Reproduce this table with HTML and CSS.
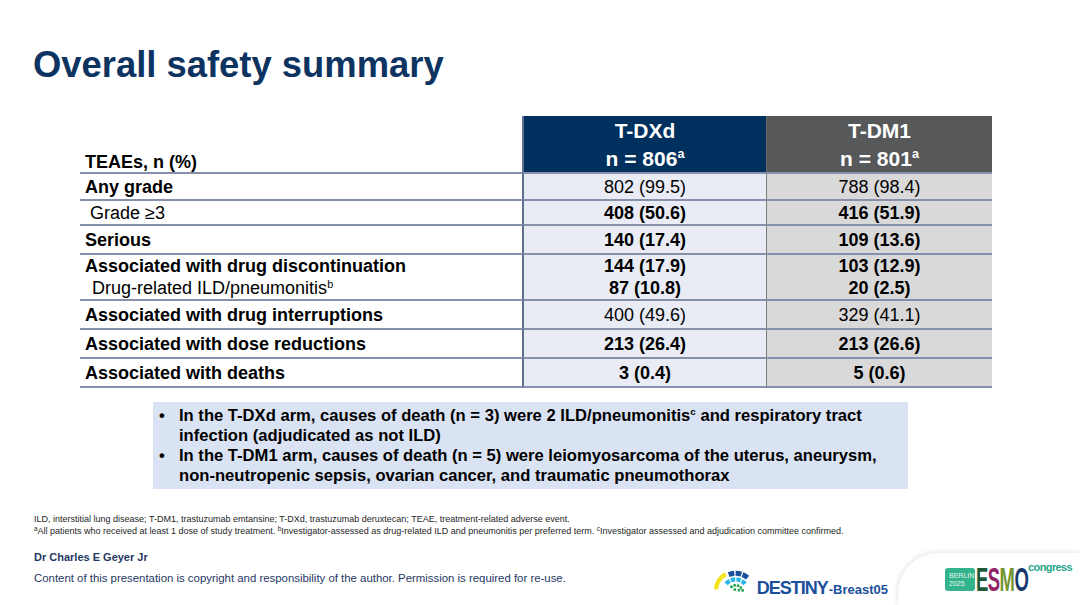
FILE: index.html
```html
<!DOCTYPE html>
<html lang="en">
<head>
<meta charset="utf-8">
<title>Overall safety summary</title>
<link rel="stylesheet" href="styles.css">
</head>
<body>
<div class="slide">
  <h1 class="title">Overall safety summary</h1>

  <div class="safety">
    <div class="c lab h hlab">TEAEs, n (%)</div>
    <div class="c h hdxd"><div>T-DXd</div><div>n = 806<sup class="sp">a</sup></div></div>
    <div class="c h hdm1"><div>T-DM1</div><div>n = 801<sup class="sp">a</sup></div></div>

    <div class="c lab b">Any grade</div>
    <div class="c val dxd">802 (99.5)</div>
    <div class="c val dm1">788 (98.4)</div>

    <div class="c lab sub">Grade ≥3</div>
    <div class="c val dxd b">408 (50.6)</div>
    <div class="c val dm1 b">416 (51.9)</div>

    <div class="c lab b">Serious</div>
    <div class="c val dxd b">140 (17.4)</div>
    <div class="c val dm1 b">109 (13.6)</div>

    <div class="c lab two"><div class="b">Associated with drug discontinuation</div><div class="sub2">Drug-related ILD/pneumonitis<sup class="sp">b</sup></div></div>
    <div class="c val dxd b two"><div>144 (17.9)</div><div>87 (10.8)</div></div>
    <div class="c val dm1 b two"><div>103 (12.9)</div><div>20 (2.5)</div></div>

    <div class="c lab b">Associated with drug interruptions</div>
    <div class="c val dxd">400 (49.6)</div>
    <div class="c val dm1">329 (41.1)</div>

    <div class="c lab b">Associated with dose reductions</div>
    <div class="c val dxd b">213 (26.4)</div>
    <div class="c val dm1 b">213 (26.6)</div>

    <div class="c lab b last">Associated with deaths</div>
    <div class="c val dxd b last">3 (0.4)</div>
    <div class="c val dm1 b last">5 (0.6)</div>
  </div>

  <div class="note">
    <ul class="bullets">
      <li><span class="dot">•</span><p class="btext"><span class="ln">In the T-DXd arm, causes of death (n = 3) were 2 ILD/pneumonitis<sup class="sp">c</sup> and respiratory tract</span><span class="ln">infection (adjudicated as not ILD)</span></p></li>
      <li><span class="dot">•</span><p class="btext"><span class="ln">In the T-DM1 arm, causes of death (n = 5) were leiomyosarcoma of the uterus, aneurysm,</span><span class="ln">non-neutropenic sepsis, ovarian cancer, and traumatic pneumothorax</span></p></li>
    </ul>
  </div>

  <div class="foot">
    <p>ILD, interstitial lung disease; T-DM1, trastuzumab emtansine; T-DXd, trastuzumab deruxtecan; TEAE, treatment-related adverse event.</p>
    <p><sup class="fs">a</sup>All patients who received at least 1 dose of study treatment. <sup class="fs">b</sup>Investigator-assessed as drug-related ILD and pneumonitis per preferred term. <sup class="fs">c</sup>Investigator assessed and adjudication committee confirmed.</p>
  </div>

  <div class="bottom">
    <div class="credits">
      <div class="author">Dr Charles E Geyer Jr</div>
      <div class="copy">Content of this presentation is copyright and responsibility of the author. Permission is required for re-use.</div>
    </div>
    <div class="destiny">
      <svg class="dicon" width="37" height="22" viewBox="0 0 36 21">
        <path d="M2.8 18.5 A19.5 19.5 0 0 1 12.3 3.9" fill="none" stroke="#f5e21b" stroke-width="4.2"/>
        <path d="M15.3 4.3 A18 18 0 0 1 20.7 3.0" fill="none" stroke="#1b4f9c" stroke-width="4.8"/>
        <path d="M22 3 A18 18 0 0 1 27.6 3.9" fill="none" stroke="#1b4f9c" stroke-width="4.8"/>
        <path d="M28.7 4.3 A18 18 0 0 1 33.6 7.2" fill="none" stroke="#1b4f9c" stroke-width="4.8"/>
        <path d="M12.8 13.3 A12 12 0 0 1 16.4 10.4" fill="none" stroke="#2bb4e6" stroke-width="4.2"/>
        <path d="M17.5 9.9 A12 12 0 0 1 21.6 9.0" fill="none" stroke="#2bb4e6" stroke-width="4.2"/>
        <path d="M22.8 9.0 A12 12 0 0 1 26.9 10.0" fill="none" stroke="#2bb4e6" stroke-width="4.2"/>
        <path d="M28 10.6 A12 12 0 0 1 31.2 13.3" fill="none" stroke="#2bb4e6" stroke-width="4.2"/>
        <g fill="#2aa352">
          <rect x="16.7" y="14.9" width="2.5" height="2.5"/>
          <rect x="19.8" y="13.5" width="2.5" height="2.5"/>
          <rect x="23.1" y="13.8" width="2.5" height="2.5"/>
          <rect x="25.9" y="15.7" width="2.5" height="2.5"/>
          <rect x="20.0" y="17.6" width="2.5" height="2.5"/>
          <rect x="24.0" y="18.2" width="2.5" height="2.5"/>
          <rect x="27.6" y="18.4" width="2.5" height="2.5"/>
        </g>
      </svg>
      <span class="dname">DESTINY</span><span class="dsub">-Breast05</span>
    </div>
    <div class="esmo-panel">
      <div class="berlin"><span>BERLIN</span><span>2025</span></div>
      <div class="esmo"><span class="esmo-in"><span class="e1">E</span><span class="e2">S</span><span class="e3">M</span><span class="e4">O</span></span></div>
      <div class="congress">congress</div>
    </div>
  </div>
</div>
</body>
</html>
```
FILE: styles.css
```css
* { box-sizing: border-box; }

body {
  margin: 0;
  background: #ffffff;
  font-family: "Liberation Sans", Arial, sans-serif;
  color: #000;
}

.slide {
  width: 1080px;
  height: 605px;
  overflow: hidden;
  display: flex;
  flex-direction: column;
  background: #ffffff;
}

.title {
  margin: 0;
  padding: 44px 0 0 33px;
  font-size: 36.4px;
  line-height: 42px;
  font-weight: bold;
  color: #0d3461;
}

/* ---------- table ---------- */
.safety {
  margin: 30px 0 0 80px;
  width: 912px;
  display: grid;
  grid-template-columns: 444px 242px 226px;
  grid-template-rows: 56px 27px 25px 29px 46px 29px 29px 31px;
}

.c {
  display: flex;
  align-items: center;
  font-size: 18px;
  line-height: 22px;
  border-top: 2px solid #8891ab;
  white-space: nowrap;
}

.c.h { border-top: none; }

.b { font-weight: bold; }

.lab {
  padding-left: 5px;
  border-right: 2px solid #5f6f92;
}

.lab.sub { padding-left: 10px; }

.sub2 { padding-left: 7px; }

.val { justify-content: center; }

.two {
  flex-direction: column;
  align-items: flex-start;
  justify-content: center;
}

.val.two { align-items: center; }

.dxd { background: #e9ecf5; }

.dm1 {
  background: #d9d9d9;
  border-left: 1px solid #7d7d7d;
}

.last { border-bottom: 2px solid #8891ab; }

.hlab {
  align-items: flex-end;
  font-weight: bold;
  line-height: 20px;
  border-bottom: none;
}

.hdxd, .hdm1 {
  display: block;
  text-align: center;
  color: #ffffff;
  font-size: 21px;
  font-weight: bold;
  line-height: 28px;
  padding-top: 1px;
  overflow: hidden;
}

.hdxd { background: #00305e; }
.hdm1 { background: #57585a; border-left: 1px solid #6a6a6a; }

.sp {
  font-size: 0.6em;
  line-height: 0;
  vertical-align: 0.6em;
}

/* ---------- note box ---------- */
.note {
  margin: 14px 0 0 153px;
  width: 755px;
  height: 87px;
  background: #dae3f3;
  padding: 4px 8px 0 0;
}

.bullets {
  margin: 0;
  padding: 0;
  list-style: none;
  font-size: 16.6px;
  line-height: 20px;
  font-weight: bold;
  color: #000;
}

.bullets li { display: flex; }

.btext { margin: 0; flex: 1; }

.ln { display: block; white-space: nowrap; }

.dot {
  flex: 0 0 26px;
  padding-left: 6px;
}

/* ---------- footnotes ---------- */
.foot {
  margin: 24px 0 0 34px;
  font-size: 9px;
  line-height: 12px;
  color: #1e1e1e;
}

.foot p { margin: 0; white-space: nowrap; }

.fs {
  font-size: 0.7em;
  line-height: 0;
  vertical-align: 0.45em;
}

/* ---------- bottom bar ---------- */
.bottom {
  flex: 1;
  display: flex;
}

.credits {
  flex: 1;
  padding-left: 34px;
  color: #1f3864;
}

.author {
  margin-top: 13px;
  font-size: 11px;
  line-height: 14px;
  font-weight: bold;
}

.copy {
  margin-top: 7px;
  font-size: 11.4px;
  line-height: 14px;
}

.destiny {
  align-self: flex-start;
  margin: 39px 10px 0 0;
  display: flex;
  align-items: baseline;
  line-height: 24px;
  color: #1b4f9c;
  font-weight: bold;
}

.dicon {
  align-self: flex-start;
  margin: -6px 7px 0 0;
}

.dname {
  font-size: 18px;
  letter-spacing: -1px;
}

.dsub {
  font-size: 13px;
  margin-left: 1px;
}

.esmo-panel {
  width: 182px;
  margin-top: 16px;
  background: #ffffff;
  border-top-left-radius: 40px;
  box-shadow: -1px -1px 5px rgba(0, 0, 0, 0.10);
  display: flex;
  align-items: flex-start;
  padding: 15px 0 0 47px;
}

.berlin {
  width: 30px;
  height: 23px;
  border-radius: 3px;
  background: #33b38c;
  color: #e6f6ef;
  font-size: 7px;
  line-height: 7.5px;
  display: flex;
  flex-direction: column;
  justify-content: center;
  padding-left: 4px;
}

.esmo {
  width: 52px;
  height: 24px;
  margin-left: 1px;
}

.esmo-in {
  display: inline-block;
  font-size: 33px;
  line-height: 24px;
  font-weight: bold;
  white-space: nowrap;
  transform: scaleX(0.56);
  transform-origin: left top;
  letter-spacing: -1px;
}

.e1 { color: #1d5a3a; }
.e2 { color: #8f2366; }
.e3 { color: #739530; }
.e4 { color: #17396b; }

.congress {
  margin: -7px 0 0 0;
  font-size: 11px;
  line-height: 12px;
  font-weight: bold;
  color: #2aa78a;
  letter-spacing: -0.6px;
}
```
